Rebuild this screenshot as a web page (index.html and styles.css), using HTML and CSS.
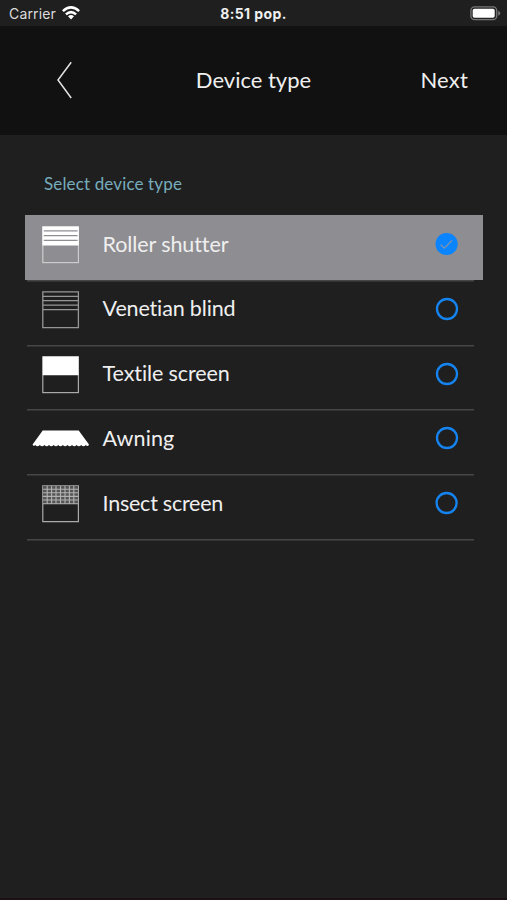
FILE: index.html
```html
<!DOCTYPE html>
<html lang="en">
<head>
<meta charset="utf-8">
<title>Device type</title>
<link rel="stylesheet" href="styles.css">
</head>
<body>
<div class="status">
  <div class="carrier"><span>Carrier</span>
    <svg class="wifi" width="18" height="14" viewBox="0 0 18 14"><g fill="none" stroke="#fff" stroke-width="2.5"><path d="M.9 5.1Q9-2.4 17.1 5.1"/><path d="M3.9 8.4Q9 3.8 14.1 8.4"/></g><path d="M6 10.2Q9 7.9 12 10.2L9 13.6Z" fill="#fff"/></svg>
  </div>
  <div class="clock">8:51 pop.</div>
  <svg class="battery" width="31" height="15" viewBox="0 0 31 15"><rect x=".9" y=".9" width="25.8" height="12.8" rx="3.6" fill="#222" stroke="#777" stroke-width="1.3"/><rect x="2.7" y="2.8" width="22" height="9" rx="1.8" fill="#fff"/><path d="M28.2 4.8Q30.2 5.6 30.2 7.3T28.2 9.8Z" fill="#777"/></svg>
</div>
<header class="nav">
  <svg class="back" width="18" height="40" viewBox="0 0 18 40"><path d="M15.2 2.2L2 20L15.2 38" fill="none" stroke="#e4e4e4" stroke-width="1.5"/></svg>
  <h1 class="title">Device type</h1>
  <span class="next">Next</span>
</header>
<main>
  <h2 class="section">Select device type</h2>
  <ul class="list">
    <li class="row selected">
      <svg class="icon" width="58" height="38" viewBox="0 0 58 38"><rect x="10.8" y=".8" width="35.6" height="35.8" fill="none" stroke="#ccc" stroke-width="1.2"/><path d="M10.4.4h36.4v19H10.4z" fill="#fff"/><path d="M11.8 4.8h33.8M11.8 9.6h33.8M11.8 14.4h33.8" stroke="#8e8d92" stroke-width="1.3"/></svg>
      <span class="label roller">Roller shutter</span>
      <svg class="radio" width="24" height="24" viewBox="0 0 24 24"><circle cx="11.6" cy="12" r="11.1" fill="#0a84ff"/><path d="M5.7 12.7L9.3 16.2L17 8.5" fill="none" stroke="#7f93ad" stroke-width="1.3"/></svg>
    </li>
    <li class="row">
      <svg class="icon" width="58" height="38" viewBox="0 0 58 38"><path d="M10.8.8h35.6v35.8H10.8zM11 5.3h35M11 9.7h35M11 14.2h35M11 18.6h35" fill="none" stroke="#969696" stroke-width="1.3"/></svg>
      <span class="label venetian">Venetian blind</span>
      <svg class="radio" width="24" height="24" viewBox="0 0 24 24"><circle cx="12" cy="12" r="10" fill="none" stroke="#1584f0" stroke-width="2.3"/></svg>
    </li>
    <li class="row">
      <svg class="icon" width="58" height="38" viewBox="0 0 58 38"><rect x="10.8" y=".8" width="35.6" height="35.8" fill="none" stroke="#aaa" stroke-width="1.2"/><path d="M10.7.5h35.8v18.7H10.7z" fill="#fff"/></svg>
      <span class="label textile">Textile screen</span>
      <svg class="radio" width="24" height="24" viewBox="0 0 24 24"><circle cx="12" cy="12" r="10" fill="none" stroke="#1584f0" stroke-width="2.3"/></svg>
    </li>
    <li class="row">
      <svg class="icon" width="58" height="38" viewBox="0 0 58 38"><path d="M10.7 10.6h36L57 24.4q-1.3 2.8-3.2.6q-2.3 2.4-4.6 0q-2.3 2.4-4.6 0q-2.3 2.4-4.6 0q-2.3 2.4-4.6 0q-2.3 2.4-4.6 0q-2.3 2.4-4.6 0q-2.3 2.4-4.6 0q-2.3 2.4-4.6 0q-2.3 2.4-4.6 0q-2.3 2.4-4.6 0q-2.3 2.4-4.6 0q-2 2-2.6-.6z" fill="#fff"/></svg>
      <span class="label awning">Awning</span>
      <svg class="radio" width="24" height="24" viewBox="0 0 24 24"><circle cx="12" cy="12" r="10" fill="none" stroke="#1584f0" stroke-width="2.3"/></svg>
    </li>
    <li class="row">
      <svg class="icon" width="58" height="38" viewBox="0 0 58 38"><path d="M10.8.8h35.6v35.8H10.8z" fill="none" stroke="#aaa" stroke-width="1.2"/><path d="M11 1h35v18H11z" fill="#555"/><path d="M11 4.2h35M11 7.8h35M11 11.4h35M11 15h35M11 18.8h35M15.2 1v18M19.6 1v18M24 1v18M28.5 1v18M33 1v18M37.4 1v18M41.8 1v18" fill="none" stroke="#b2b2b2" stroke-width="1.1"/></svg>
      <span class="label insect">Insect screen</span>
      <svg class="radio" width="24" height="24" viewBox="0 0 24 24"><circle cx="11.6" cy="12" r="10" fill="none" stroke="#1584f0" stroke-width="2.3"/></svg>
    </li>
  </ul>
</main>
</body>
</html>
```
FILE: styles.css
```css
* { box-sizing: border-box; }
body {
  margin: 0;
  height: 900px;
  display: flex;
  flex-direction: column;
  overflow: hidden;
  background: linear-gradient(#1b1218, #1b1218) 0 898px / 100% 2px no-repeat #1f1f1f;
  color: #efefef;
  font-family: Lato, sans-serif;
  font-variant-ligatures: none;
}
.status {
  height: 26px;
  display: grid;
  grid-template-columns: 1fr auto 1fr;
  padding: 0 6px 0 9px;
  font-family: Inter, sans-serif;
  line-height: 27px;
}
.carrier { display: flex; font-size: 14px; letter-spacing: .15px; color: #ddd; }
.wifi { margin: 6px 0 0 6px; }
.clock { margin-right: 3px; font-size: 14px; font-weight: 700; letter-spacing: .4px; }
.battery { justify-self: end; margin-top: 6px; }
.nav {
  height: 109px;
  display: grid;
  grid-template-columns: 1fr auto 1fr;
  align-items: center;
  padding: 0 39px 0 55px;
  background: #111;
}
.back { margin-left: 1px; margin-top: -1px; }
.title, .next { margin: -1px 0 0; font-size: 22px; font-weight: 400; line-height: 30px; }
.title { margin-right: 16px; }
.next { justify-self: end; letter-spacing: .2px; }
.section {
  margin: 38px 0 0 44px;
  height: 42px;
  font-size: 17px;
  font-weight: 400;
  line-height: 22px;
  letter-spacing: .14px;
  color: #77acbd;
}
.list { list-style: none; margin: 0 24.5px 0 25px; padding: 0; }
.row, .list::after {
  background: linear-gradient(#464646, #464646) 2px 0 / 447px 1.5px no-repeat;
}
.list::after { content: ""; display: block; height: 2px; }
.row {
  height: 64.75px;
  display: flex;
  padding: 0 24px 0 7px;
}
.selected { background: #8e8d92; }
.icon { margin-top: 11px; flex: none; }
.label { flex: 1; margin-left: 12.6px; font-size: 21.5px; line-height: 30px; padding-top: 13.7px; }
.roller, .textile { letter-spacing: -.1px; }
.venetian { letter-spacing: -.15px; }
.awning { letter-spacing: .1px; }
.insect { letter-spacing: -.25px; }
.radio { margin-top: 17.2px; flex: none; }
```
